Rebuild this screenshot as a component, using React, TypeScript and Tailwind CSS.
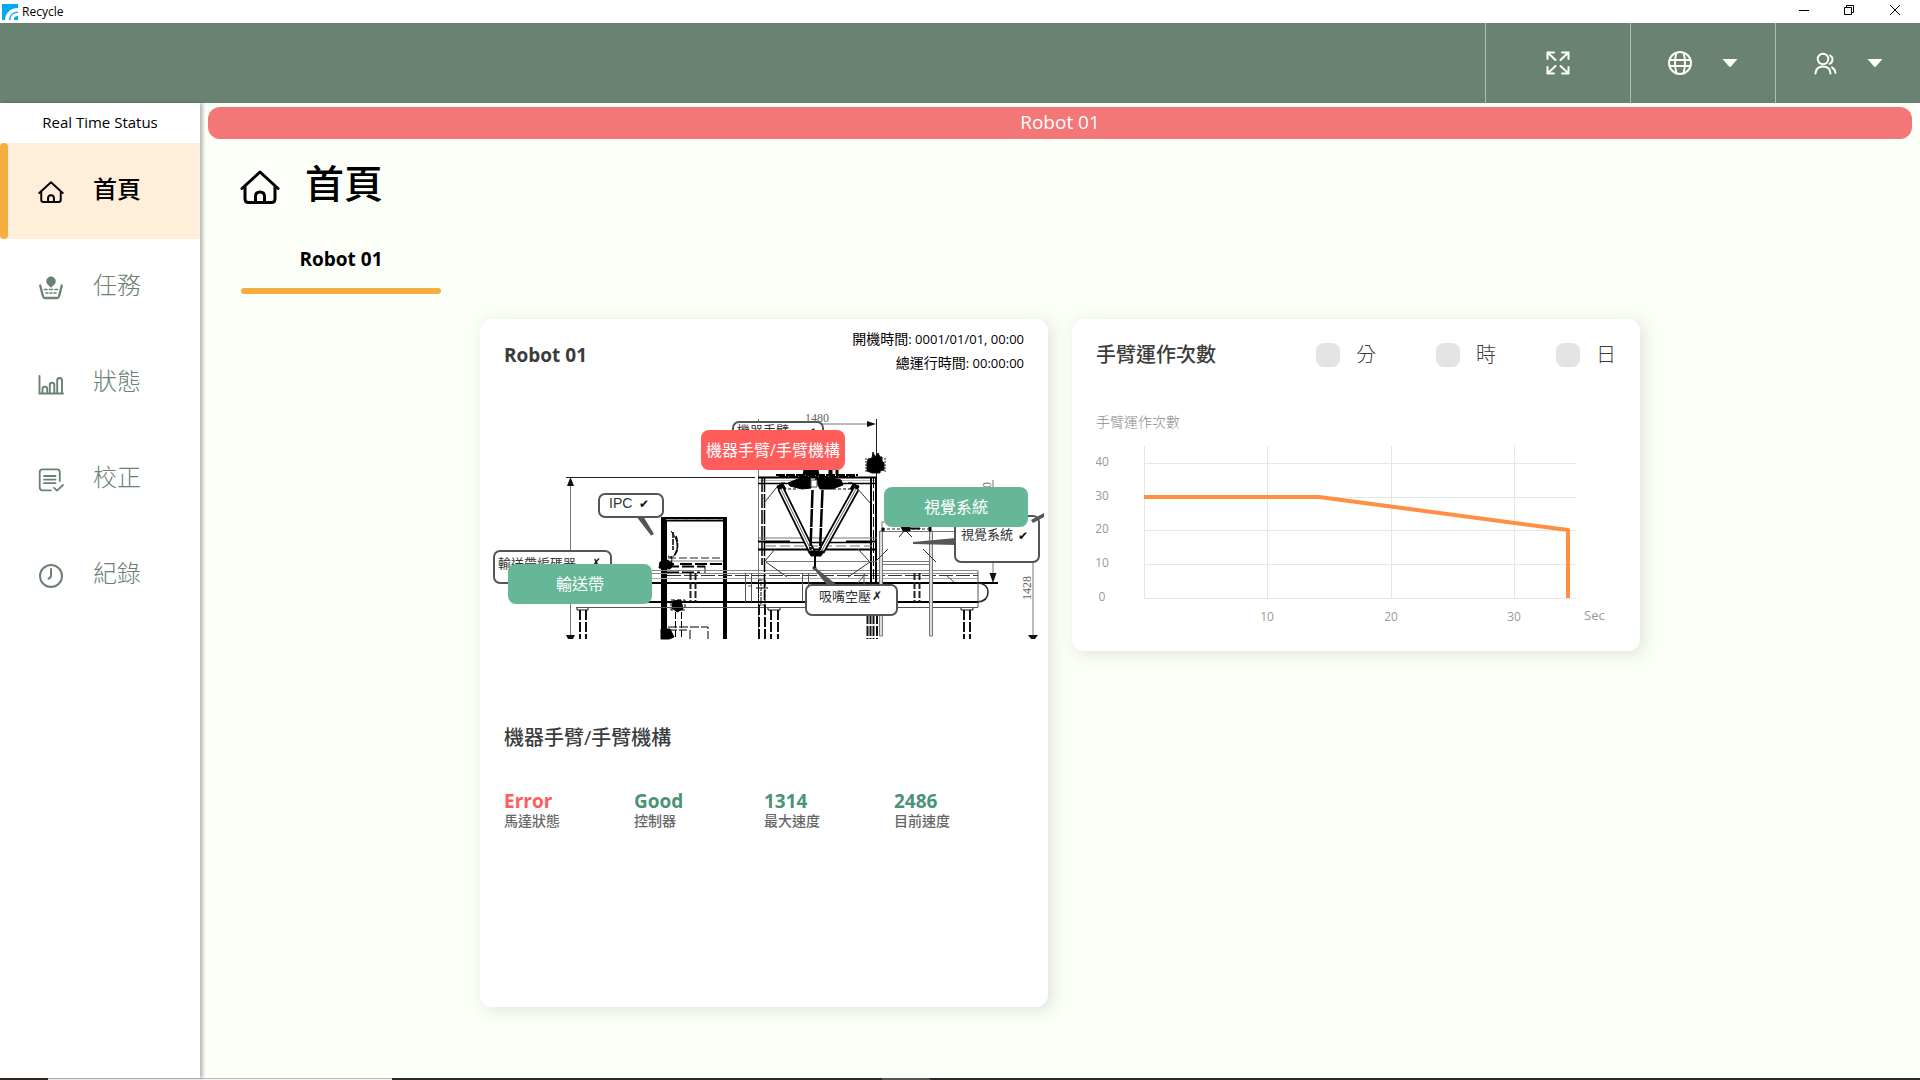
import React from "react";

const FONT = "font-['Open_Sans','Noto_Sans_CJK_TC',sans-serif]";

type IconProps = { className?: string };

function LogoIcon() {
  return (
    <svg viewBox="0 0 16 16" className="h-4 w-4" aria-hidden="true">
      <rect width="16" height="16" fill="#00a9f1" />
      <path d="M3 16C3.500 8.500 8.500 4 16 4V7.500C10.500 8 7.500 11 7 16Z" fill="#fff" />
      <path d="M8.500 16C8.500 11.500 11.500 9 16 9V12C13.500 12 11.800 13.500 11.800 16Z" fill="#fff" />
    </svg>
  );
}

function HomeIcon({ className }: IconProps) {
  return (
    <svg viewBox="0 0 40 34" className={className} fill="none" stroke="currentColor" strokeWidth="3" strokeLinecap="round" strokeLinejoin="round" aria-hidden="true">
      <path d="M2 18.500L20 2L38 18.500" />
      <path d="M5 17V29Q5 32.500 8.500 32.500H31.500Q35 32.500 35 29V17" />
      <path d="M15.500 32V26.500Q15.500 22 20 22Q24.500 22 24.500 26.500V32" />
    </svg>
  );
}

function TaskIcon({ className }: IconProps) {
  return (
    <svg viewBox="0 0 26 26" className={className} fill="none" stroke="currentColor" strokeLinecap="round" strokeLinejoin="round" aria-hidden="true">
      <path d="M13 1.500A4.800 4.800 0 0 1 17.800 6.300C17.800 9 15.500 10 13 12.800C10.500 10 8.200 9 8.200 6.300A4.800 4.800 0 0 1 13 1.500Z" fill="currentColor" stroke="none" />
      <path d="M2.200 10.500L5 21.500Q5.500 23 7 23H19Q20.500 23 21 21.500L23.800 10.500" strokeWidth="2.300" />
      <path d="M6.500 14.500H9M11.500 14.500H14.500M17 14.500H19.500M8 18H10M12 18H14M16 18H18" strokeWidth="1.600" />
    </svg>
  );
}

function ChartIcon({ className }: IconProps) {
  return (
    <svg viewBox="0 0 26 26" className={className} fill="none" stroke="currentColor" strokeWidth="1.900" strokeLinecap="round" aria-hidden="true">
      <path d="M1.500 5V22.500H25" />
      <path d="M4.500 22V18Q4.500 15.800 6.800 15.800Q9.200 15.800 9.200 18V22M11.800 22V14Q11.800 11.800 14 11.800Q16.300 11.800 16.300 14V22M19.200 22V9.500Q19.200 7 21.500 7Q24 7 24 9.500V22" />
    </svg>
  );
}

function CalibrateIcon({ className }: IconProps) {
  return (
    <svg viewBox="0 0 26 26" className={className} fill="none" stroke="currentColor" strokeWidth="1.800" strokeLinecap="round" strokeLinejoin="round" aria-hidden="true">
      <path d="M13 23.300H4.500Q1.700 23.300 1.700 20.500V5Q1.700 2.300 4.500 2.300H19Q21.800 2.300 21.800 5V14" />
      <path d="M6 9H17.500M6 12.600H17.500M6 16.200H17.500" />
      <path d="M16 20.800L19 23.600L25 18" />
    </svg>
  );
}

function ClockIcon({ className }: IconProps) {
  return (
    <svg viewBox="0 0 26 26" className={className} fill="none" stroke="currentColor" strokeWidth="2" strokeLinecap="round" aria-hidden="true">
      <circle cx="13" cy="13" r="11" />
      <path d="M13 6V12.500Q13 15 10.500 15.800" />
    </svg>
  );
}

function ExpandIcon() {
  return (
    <svg viewBox="0 0 24 24" className="h-6 w-6" fill="none" stroke="currentColor" strokeWidth="2" strokeLinecap="round" strokeLinejoin="round" aria-hidden="true">
      <path d="M1.500 8V1.500H8M1.500 1.500L9.500 9" />
      <path d="M16 1.500H22.500V8M22.500 1.500L14.500 9" />
      <path d="M1.500 16V22.500H8M1.500 22.500L9.500 15" />
      <path d="M22.500 16V22.500H16M22.500 22.500L14.500 15" />
    </svg>
  );
}

function GlobeIcon() {
  return (
    <svg viewBox="0 0 24 24" className="h-6 w-6" fill="none" stroke="currentColor" strokeWidth="1.900" aria-hidden="true">
      <circle cx="12" cy="12" r="11" />
      <path d="M8.500 1.800Q5.500 12 8.500 22.200M15.500 1.800Q18.500 12 15.500 22.200M1.200 9H22.800M1.200 15H22.800" />
    </svg>
  );
}

function UsersIcon() {
  return (
    <svg viewBox="0 0 24 24" className="h-6 w-6" fill="none" stroke="currentColor" strokeWidth="1.900" strokeLinecap="round" aria-hidden="true">
      <circle cx="10" cy="8" r="5.300" />
      <path d="M2.500 22.500Q3 15.500 10 15.500Q17 15.500 17.500 22.500" />
      <path d="M17 4.500Q20 6 19.500 9Q19 12 16.500 12.800M19 16.300Q22 18 22.500 22" />
    </svg>
  );
}

function Caret() {
  return (
    <svg viewBox="0 0 16 8" className="h-2 w-4" aria-hidden="true">
      <path d="M0.500 0H15.500L9.200 7.200Q8 8.500 6.800 7.200Z" fill="currentColor" />
    </svg>
  );
}

function TitleBar() {
  return (
    <div className="flex h-[23px] items-center justify-between bg-white text-black">
      <div className="flex items-center gap-1 pl-0.5">
        <LogoIcon />
        <span className="text-xs leading-4">Recycle</span>
      </div>
      <div className="flex h-full pr-0.5 pb-1">
        <button type="button" aria-label="Minimize" className="flex w-[45px] items-center justify-center">
          <svg viewBox="0 0 10 10" className="h-2.5 w-2.5"><path d="M0 5.500H10" stroke="#000" /></svg>
        </button>
        <button type="button" aria-label="Restore" className="flex w-[46px] items-center justify-center">
          <svg viewBox="0 0 10 10" className="h-2.5 w-2.5" fill="none" stroke="#000"><path d="M0.500 2.500H7.500V9.500H0.500ZM2.500 2.500V0.500H9.500V7.500H7.500" /></svg>
        </button>
        <button type="button" aria-label="Close" className="flex w-[46px] items-center justify-center">
          <svg viewBox="0 0 10 10" className="h-2.5 w-2.5" stroke="#000"><path d="M0 0L10 10M10 0L0 10" /></svg>
        </button>
      </div>
    </div>
  );
}

function Header() {
  const cell = "flex w-[145px] items-center justify-center gap-[30px] border-l border-[#b0bdb4]";
  return (
    <header className="flex h-20 justify-end bg-[#6a8272] text-white">
      <button type="button" aria-label="Full screen" className={cell}><ExpandIcon /></button>
      <button type="button" aria-label="Language" aria-haspopup="menu" className={cell}><GlobeIcon /><Caret /></button>
      <button type="button" aria-label="Account" aria-haspopup="menu" className={cell}><UsersIcon /><Caret /></button>
    </header>
  );
}

const NAV = [
  { label: "首頁", Icon: HomeIcon, active: true },
  { label: "任務", Icon: TaskIcon, active: false },
  { label: "狀態", Icon: ChartIcon, active: false },
  { label: "校正", Icon: CalibrateIcon, active: false },
  { label: "紀錄", Icon: ClockIcon, active: false },
];

function Sidebar() {
  return (
    <aside className="z-10 w-[200px] shrink-0 bg-white shadow-[3px_0_3px_rgba(0,0,0,0.25)]">
      <div className="flex h-10 items-center justify-center pb-0.5 text-[15px] text-black">Real Time Status</div>
      <nav>
        {NAV.map(({ label, Icon, active }) => (
          <a
            key={label}
            href="#"
            aria-current={active ? "page" : undefined}
            className={
              active
                ? "flex h-24 items-center bg-[#feeeda] font-medium text-black"
                : "flex h-24 items-center font-light text-[#6a8272]"
            }
          >
            <span className={active ? "h-full w-2 rounded-full bg-[#f7ae41]" : "h-full w-2"} />
            <Icon className="mt-0.5 ml-[30px] h-[26px] w-[26px]" />
            <span className="ml-[29px] pb-1 text-2xl">{label}</span>
          </a>
        ))}
      </nav>
    </aside>
  );
}

function MachineDrawing() {
  return (
    <svg viewBox="490 400 554 240" className="block h-auto w-full" fill="none" stroke="#111" strokeWidth="1" role="img" aria-label="Robot 01">
      {/* dimension lines */}
      <g stroke="#777">
        <path d="M570.500 480V639M993 480V578M1033 562V639M758.500 419V639M822 424H870" />
        <path d="M566 477.500H755M876.500 419V478M985 582.500H998" stroke="#222" />
      </g>
      <g fill="#111" stroke="none">
        <path d="M570.500 477L574 486H567ZM566 635H575L573 639H568ZM876 424L867 421V427ZM993 583L989.500 573H996.500ZM1028 635H1038L1035 639H1031Z" />
      </g>

      {/* cabinet */}
      <g stroke="#000">
        <path d="M664 517V639" strokeWidth="6" />
        <path d="M725 517V639" strokeWidth="4" />
        <path d="M661 518H727M666 520.500H723" strokeWidth="2" />
        <path d="M666 519.500H723" stroke="#999" strokeDasharray="8 3" />
        <path d="M668 558H723" stroke="#222" strokeDasharray="8 3" />
        <path d="M668 561H723" stroke="#888" />
        <path d="M680 564H723M667 566.500H705M667 572.500H700" strokeDasharray="12 3" strokeWidth="2" />
        <path d="M673 532V550M676 536Q680 547 674 556" strokeDasharray="6 1" strokeWidth="1.500" />
        <path d="M671 531Q679 540 677 552Q672 560 668 556M705 566V573M671 556Q674 564 667 566" />
        <path d="M660 562L667 560L674 564L670 569L659 568Z" fill="#000" />
        <path d="M671 600H685V610H671Z" strokeDasharray="4 2" />
        <path d="M673 601L681 600L683 609L677 612L672 608Z" fill="#000" />
        <path d="M675.500 612V639M681.500 612V639" strokeDasharray="7 2" />
        <path d="M668 627H708V639M668 630H687M690 630V639" strokeDasharray="9 2" />
        <path d="M661 629H670L674 637L669 639H661Z" fill="#000" />
      </g>

      {/* conveyor */}
      <path d="M652 570.500H978M652 573.500H978" stroke="#888" />
      <path d="M667 575.500H978" stroke="#333" strokeDasharray="14 3" />
      <path d="M605 583H998" stroke="#000" strokeWidth="2" />
      <path d="M640 578.500H978" stroke="#aaa" />
      <path d="M576 602H978" stroke="#000" strokeWidth="2" />
      <path d="M576 607.500H978M978 571V607" stroke="#555" />
      <path d="M978 583Q988 584 988 592Q988 601 978 602" stroke="#222" strokeWidth="1.500" />
      <g stroke="#222" strokeDasharray="7 2">
        <path d="M690.500 573V602M695.500 573V602M914.500 573V602M919.500 573V602" strokeWidth="2" />
      </g>
      <path d="M745.500 573V602M751.500 573V602M802.500 573V602M808.500 573V602M858 583L865 574M864 574V602M947 576L954 582M748 586H752" stroke="#555" />
      {/* conveyor legs */}
      <g stroke="#111" strokeWidth="2" strokeDasharray="10 2">
        <path d="M580 610V639M586 610V639M771 610V639M778 610V639M964 610V639M970 610V639M759 605V639M765 605V639" />
        <path d="M867.500 614V639M870.500 614V639M873.500 614V639M877 614V639" />
      </g>
      <path d="M577 608V610H588V608M768 608V610H780V608M961 608V610H973V608" />

      {/* gantry frame */}
      <g stroke="#000">
        <path d="M758 477.500H877" strokeWidth="2" />
        <path d="M758 483.500H877" strokeWidth="1.500" />
        <path d="M758 480.500H877" stroke="#bbb" />
        <path d="M762 478V565M764.500 478V600" strokeDasharray="14 2" strokeWidth="1.500" />
        <path d="M871 478V583M876 478V583" strokeWidth="2" />
        <path d="M873.500 478V583" strokeDasharray="10 3" />
        <path d="M758 538H877" stroke="#777" />
        <path d="M758 541.500H790M846 541.500H877M758 549.500H877" strokeWidth="2" />
        <path d="M764 542.500H872" strokeWidth="1.500" />
        <path d="M766 546H872" stroke="#777" strokeDasharray="10 4" />
        <path d="M758.500 580H765V605H758.500ZM756 588H768M761 582V604" strokeDasharray="4 1" />
      </g>
      <path d="M764 503L777 487M870 503L857 488M765 561L775 549M766 562L787 577M870 562L848 577M869 561L858 549" stroke="#333" />
      <path d="M766 561.500H877" stroke="#777" />

      {/* delta robot */}
      <g fill="#000" stroke="#000">
        <path d="M776 475H858M779 477H855" strokeDasharray="9 1" strokeWidth="2" />
        <path d="M804 470H818L819 475H803ZM829 468H832V475H829ZM836 470H838V475H836Z" />
        <path d="M788 483L798 479L810 477L811 488L802 489L790 486Z" />
        <path d="M815 479L827 477L841 480L843 485L832 489L820 489Z" />
        <path d="M811 480H817V487H811Z" fill="#fff" stroke="#555" />
        <path d="M777 486L783 484L786 489L779 491ZM859 486L853 484L850 489L857 491Z" />
        <path d="M785 483Q781 482 779 485M848 483Q854 482 857 486" fill="none" />
        <path d="M783 489H797M833 489H850" strokeDasharray="3 2" />
      </g>
      <path d="M781 489L812 552M856 489L821 552" stroke="#000" strokeWidth="7" />
      <path d="M781 489L812 552M856 489L821 552" stroke="#fff" strokeWidth="3.500" />
      <path d="M781 489L812 552M856 489L821 552" stroke="#666" strokeWidth="1" />
      <path d="M812.500 490L810.500 550M822.500 490L820 550" stroke="#000" strokeWidth="2.500" strokeDasharray="18 1" />
      <path d="M808 551H824L821 556H811Z" fill="#000" />
      <path d="M815 556V569" stroke="#000" strokeWidth="2" />
      <circle cx="814.500" cy="568" r="2" fill="#222" stroke="none" />

      {/* side motor */}
      <path d="M868 459L872 458L873 452L875 457L878 453L880 457H882V461L884 463V470L880 471V473H872L867 471V463Z" fill="#000" />
      <path d="M866 458V472M885 458V472" strokeDasharray="2 1" stroke="#222" />

      {/* camera stand */}
      <g stroke="#777">
        <path d="M879.500 531V636H882.500V531ZM929.500 531V636H932.500V531Z" fill="#ddd" />
        <path d="M879 531.500H955M882 561.500H929M882 564.500H929M882 530V522H887" />
        <path d="M875 562L888 549M923 549L936 562" stroke="#333" />
        <path d="M899 537L905 530L912 537" stroke="#222" />
      </g>
      <path d="M882 529H931" stroke="#222" strokeDasharray="3 2" />
      <path d="M901 527H910V531H903ZM910 528H920V529H910ZM882 528H884V531H882ZM929 527H931V531H929Z" fill="#000" />

      {/* callouts */}
      <g fill="#fff" stroke="#555" strokeWidth="2">
        <rect x="599" y="494" width="64" height="23" rx="6" />
        <rect x="494" y="551" width="117" height="32" rx="6" />
        <rect x="733" y="422" width="90" height="32" rx="6" />
        <rect x="955" y="516" width="84" height="46" rx="6" />
        <rect x="806" y="585" width="91" height="30" rx="6" />
      </g>
      <g fill="#555" stroke="none">
        <path d="M636 516H643L654 534L651 535.500ZM827 585L813 568L816 568L837 585ZM956 538V545L913 544V542ZM1031 520L1044 513V517L1033 523Z" />
      </g>
      <g fill="#333" stroke="none" fontFamily="'Liberation Sans','Noto Sans CJK TC',sans-serif" fontSize="13">
        <text x="609" y="508" fontSize="14">IPC</text>
        <text x="498" y="568">輸送帶編碼器</text>
        <text x="737" y="435">機器手臂</text>
        <text x="961" y="539">視覺系統</text>
        <text x="819" y="601">吸嘴空壓</text>
      </g>
      <g fill="#111" stroke="none" fontFamily="'DejaVu Sans',sans-serif" fontSize="12">
        <text x="639" y="508">✔</text>
        <text x="591" y="567">✗</text>
        <text x="806" y="436">✔</text>
        <text x="1018" y="540">✔</text>
        <text x="872" y="600">✗</text>
      </g>
      <g fill="#666" stroke="none" fontFamily="'Liberation Serif',serif" fontSize="12">
        <text x="805" y="422">1480</text>
        <text transform="translate(1031 600) rotate(-90)">1428</text>
        <text transform="translate(991 488) rotate(-90)">0</text>
      </g>
    </svg>
  );
}

const STATS = [
  { value: "Error", label: "馬達狀態", color: "text-[#ff5c5c]" },
  { value: "Good", label: "控制器", color: "text-[#4b9277]" },
  { value: "1314", label: "最大速度", color: "text-[#4b9277]" },
  { value: "2486", label: "目前速度", color: "text-[#4b9277]" },
];

const CARD = "w-[568px] rounded-xl bg-white shadow-[4px_3px_16px_rgba(60,70,50,0.14)]";

function TimeLine({ label, value }: { label: string; value: string }) {
  return (
    <p className="text-[13px] leading-6">
      <span className="text-sm leading-6">{label}</span>: {value}
    </p>
  );
}

function RobotCard() {
  const part = "absolute flex h-10 w-36 items-center justify-center rounded-lg text-base text-white";
  return (
    <section className={`${CARD} min-h-[688px] pb-8`}>
      <div className="flex h-[81px] justify-between px-6 pt-2">
        <h2 className="pt-3 text-[19px] leading-8 font-bold text-[#3c3c3c]">Robot 01</h2>
        <div className="text-right text-black">
          <TimeLine label="開機時間" value="0001/01/01, 00:00" />
          <TimeLine label="總運行時間" value="00:00:00" />
        </div>
      </div>
      <div className="relative mr-1 ml-[10px]">
        <MachineDrawing />
        <button type="button" className={`${part} top-[30px] left-[211px] bg-[#ff5c5c]`}>機器手臂/手臂機構</button>
        <button type="button" className={`${part} top-[87px] left-[394px] bg-[#65b798]`}>視覺系統</button>
        <button type="button" className={`${part} top-[164px] left-[18px] bg-[#65b798]`}>輸送帶</button>
      </div>
      <div className="px-6 pt-20">
        <h3 className="text-xl leading-9 font-medium text-[#3c3c3c]">機器手臂/手臂機構</h3>
        <dl className="mt-[34px] grid grid-cols-4">
          {STATS.map((s) => (
            <div key={s.label} className="flex flex-col-reverse">
              <dt className="text-sm leading-4 font-medium text-[#666]">{s.label}</dt>
              <dd className={`text-[19px] leading-[23px] font-bold ${s.color}`}>{s.value}</dd>
            </div>
          ))}
        </dl>
      </div>
    </section>
  );
}

function Chart() {
  const ys = [463, 497, 530, 564, 598];
  const xs = [1144, 1267, 1391, 1514];
  return (
    <svg viewBox="1096 440 520 190" className="block h-auto w-full" role="img" aria-label="手臂運作次數" fontFamily="'Open Sans',sans-serif" fontSize="12" fill="#999">
      <g stroke="#e6e6e6" fill="none">
        {ys.map((y) => (
          <path key={y} d={`M1144 ${y}.5H1576`} />
        ))}
        {xs.map((x) => (
          <path key={x} d={`M${x}.5 446V598`} />
        ))}
      </g>
      <path d="M1144 497H1319L1568 530V598" fill="none" stroke="#ff8f42" strokeWidth="4" strokeLinejoin="round" />
      {["40", "30", "20", "10", "0"].map((t, i) => (
        <text key={t} x="1102" y={ys[i] + 3} textAnchor="middle">{t}</text>
      ))}
      {["10", "20", "30"].map((t, i) => (
        <text key={t} x={xs[i + 1]} y="621" textAnchor="middle">{t}</text>
      ))}
      <text x="1584" y="620" fontSize="13">Sec</text>
    </svg>
  );
}

function CountCard() {
  return (
    <section className={`${CARD} px-6 pb-[21px]`}>
      <div className="flex items-center justify-between pt-[18px]">
        <h2 className="text-xl leading-9 font-medium text-[#3c3c3c]">手臂運作次數</h2>
        <div className="flex gap-[60px]">
          {["分", "時", "日"].map((t) => (
            <label key={t} className="flex items-center gap-4 text-xl leading-9 font-light text-[#3c3c3c]">
              <input type="checkbox" className="h-6 w-6 appearance-none rounded-lg bg-[#e3e3e3] checked:bg-[#f7ae41]" />
              {t}
            </label>
          ))}
        </div>
      </div>
      <p className="mt-10 mb-[9px] text-sm leading-[18px] font-light text-[#8c8c8c]">手臂運作次數</p>
      <Chart />
    </section>
  );
}

export default function App() {
  return (
    <div className={`flex min-h-screen flex-col bg-[#fbfff7] ${FONT}`}>
      <TitleBar />
      <Header />
      <div className="flex flex-1">
        <Sidebar />
        <main className="min-w-0 flex-1">
          <div role="alert" className="mx-2 mt-1 flex h-8 items-center justify-center rounded-xl bg-[#f37777] pb-0.5 text-[19px] text-white">
            Robot 01
          </div>
          <div className="flex items-center gap-[25px] px-10 pt-[14px]">
            <HomeIcon className="mt-2 h-[34px] w-10" />
            <h1 className="text-[39px] leading-[60px] font-medium text-black">首頁</h1>
          </div>
          <div role="tablist" className="mt-[30px] px-[41px]">
            <button type="button" role="tab" aria-selected="true" className="flex w-[200px] flex-col items-center gap-[13px] text-[19px] leading-8 font-bold text-black">
              Robot 01
              <span className="h-1.5 w-full rounded-full bg-[#f7ae41]" />
            </button>
          </div>
          <div className="mt-[25px] flex flex-wrap items-start justify-center gap-6 px-6 pb-10">
            <RobotCard />
            <CountCard />
          </div>
        </main>
      </div>
      <div className="flex h-0.5 bg-[#2b2826]">
        <span className="ml-12 w-[344px] border-t border-[#bdbdbd] bg-[#f3f3f3]" />
        <span className="ml-[490px] w-12 bg-[#565351]" />
      </div>
    </div>
  );
}
